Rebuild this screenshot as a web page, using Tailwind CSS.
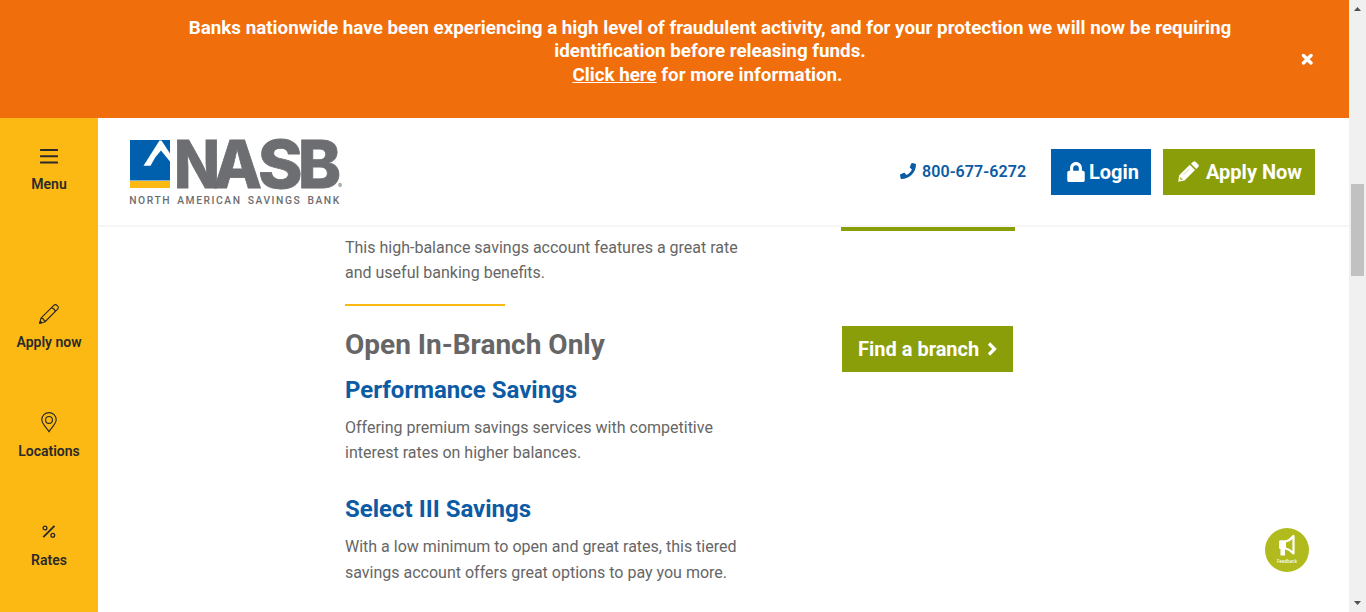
<!DOCTYPE html>
<html lang="en">
<head>
<meta charset="utf-8">
<title>NASB Savings</title>
<script src="https://cdn.jsdelivr.net/npm/@tailwindcss/browser@4"></script>
</head>
<body class="flex h-[612px] w-[1366px] overflow-hidden bg-white font-['Roboto',sans-serif] text-[#666]">
<div class="flex w-[1349px] flex-col">
  <div class="flex h-[118px] shrink-0 items-center bg-[#f06e0c] text-white">
    <p class="ml-[160px] w-[1100px] pb-[14px] text-center text-[18.8px] leading-[23.5px] font-bold">Banks nationwide have been experiencing a high level of fraudulent activity, and for your protection we will now be requiring<br>identification before releasing funds.<br><span class="pr-[5px]"><a class="underline">Click here</a> for more information.</span></p>
    <svg class="ml-[41px] h-3 w-3" viewBox="0 0 12 12"><path d="M2.500 2.500L10 10M10 2.500L2.500 10" stroke="white" stroke-width="3.400" stroke-linecap="round"/></svg>
  </div>
  <div class="flex min-h-0 flex-1">
    <nav class="flex w-[98px] shrink-0 flex-col items-center bg-[#fdb913] text-[14px] leading-5 font-semibold text-[#2a2a2a]">
      <a class="flex h-[158px] flex-col items-center pt-[30px]">
        <svg class="mb-[10px] h-4 w-[18px]" viewBox="0 0 18 16" fill="#2a2a2a"><rect y="1" width="18" height="2" rx=".6"/><rect y="7.3" width="18" height="2" rx=".6"/><rect y="13.5" width="18" height="2" rx=".6"/></svg>
        Menu
      </a>
      <a class="flex h-[109px] flex-col items-center pt-[28px]">
        <svg class="mb-[8px] h-5 w-5" viewBox="0 0 20 20" fill="none" stroke="#2a2a2a" stroke-width="1.15" stroke-linejoin="round"><path d="M.7 19.3L2 14.2 14.8 1.4Q16.5-.2 18.3 1.7Q20.200 3.5 18.6 5.200L5.800 18ZM2 14.200L4 14.500L4.400 15.900L5.700 16.200L5.800 18M12.300 3.900Q15.600 4.300 16.100 7.700"/><path d="M.7 19.3l.6-2.200 1.600 1.600z" fill="#2a2a2a"/></svg>
        Apply now
      </a>
      <a class="flex h-[109px] flex-col items-center pt-[27px]">
        <svg class="mb-[8px] h-[21px] w-4" viewBox="0 0 16 21" fill="none" stroke="#2a2a2a" stroke-width="1.15"><path d="M8 19.700C6 16.200.800 11.800.800 7.800A7.200 7.200 0 0 1 15.200 7.800C15.200 11.800 10 16.200 8 19.700Z"/><circle cx="8" cy="7.900" r="3.400"/></svg>
        Locations
      </a>
      <a class="flex h-[109px] flex-col items-center pt-[31px]">
        <svg class="mb-[12px] h-[13px] w-[14px]" viewBox="0 0 14 13" fill="none" stroke="#2a2a2a" stroke-width="1.300"><path d="M1.300 12.200L12.500 .8" stroke-width="1.900"/><circle cx="3" cy="3" r="1.900"/><circle cx="10.800" cy="10.300" r="1.900"/></svg>
        Rates
      </a>
    </nav>
    <div class="flex min-w-0 flex-1 flex-col">
      <header class="flex h-[109px] shrink-0 items-center border-b-2 border-[#f6f6f6] pl-[31px]">
        <svg class="h-[72px] w-[216px] overflow-visible" viewBox="129 136 216 72">
          <rect x="130" y="140" width="40" height="40.500" fill="#0060ae"/><rect x="130" y="181" width="40" height="7" fill="#fdb913"/>
          <path d="M143.500 165.700L159.500 140.500H161.500L170 153.500V161.500L161 150.500L155.500 157L150.500 165.700Z" fill="white"/>
          <g fill="#6d6e71" font-family="Inter, sans-serif">
            <g font-size="66" font-weight="800" stroke="#6d6e71" stroke-width=".8">
              <text x="174" y="187.700" textLength="46" lengthAdjust="spacingAndGlyphs">N</text><text x="213" y="187.700" textLength="49" lengthAdjust="spacingAndGlyphs">A</text><text x="258" y="187.700" textLength="44.500" lengthAdjust="spacingAndGlyphs">S</text><text x="298" y="187.700" textLength="43" lengthAdjust="spacingAndGlyphs">B</text>
            </g>
            <text x="129.200" y="204" font-family="Roboto, sans-serif" font-size="10.300" font-weight="500" textLength="210" lengthAdjust="spacing" word-spacing="2">NORTH AMERICAN SAVINGS BANK</text>
            <text x="338" y="188" font-size="6">®</text>
          </g>
        </svg>
        <a class="ml-[555px] flex w-[152px] items-center gap-[6px] text-[16px] font-semibold tracking-[0.08px] text-[#0c5ba5]">
          <svg class="mb-px h-4 w-4" viewBox="0 0 512 512" fill="#0c5ba5"><path d="M493.400 24.600l-104-24c-11.300-2.600-22.900 3.300-27.500 13.900l-48 112c-4.200 9.800-1.400 21.300 6.900 28l60.600 49.600c-36 76.700-98.900 140.500-177.200 177.200l-49.600-60.600c-6.800-8.300-18.200-11.100-28-6.900l-112 48C3.900 366.500-2 378.100.600 389.400l24 104C27.100 504.200 36.700 512 48 512c256.100 0 464-207.500 464-464 0-11.200-7.700-20.900-18.600-23.400z"/></svg>
          800-677-6272
        </a>
        <a class="-ml-px flex h-[46px] w-[100px] items-center gap-[4px] bg-[#0060ae] pl-4 text-[20px] font-bold text-white">
          <svg class="h-[20px] w-[18px]" viewBox="0 0 448 512" fill="white"><path d="M400 224h-24v-72C376 68.200 307.800 0 224 0S72 68.200 72 152v72H48c-26.500 0-48 21.500-48 48v192c0 26.500 21.500 48 48 48h352c26.500 0 48-21.500 48-48V272c0-26.500-21.500-48-48-48zm-104 0H152v-72c0-39.700 32.300-72 72-72s72 32.300 72 72v72z"/></svg>
          Login
        </a>
        <a class="ml-3 flex h-[46px] w-[152px] items-center gap-[7px] bg-[#8a9e0a] pl-[15px] text-[20px] font-bold text-white">
          <svg class="h-[21px] w-[21px]" viewBox="0 0 21 21"><path d="M1.200 14.300L11.800 3.800L17 9L6.500 19.600L.200 20.700ZM13 2.700L15.100 .7Q16.300 -.4 17.500 .7L20.300 3.500Q21.400 4.700 20.300 5.900L18.200 7.900Z" fill="white"/><path d="M5.500 13.800L11.700 7.600" stroke="#8a9e0a" stroke-opacity=".45" stroke-width=".8"/><path d="M2.700 16.500V18.200H4.500" stroke="#8a9e0a" stroke-width="1" fill="none"/></svg>
          Apply Now
        </a>
      </header>
      <main class="flex min-h-0 flex-1 pl-[247px] text-[16px] leading-[25.6px]">
        <div class="w-[496px] pt-[8px]">
          <p class="h-[69px] leading-[25px]">This high-balance savings account features a great rate<br>and useful banking benefits.</p>
          <div class="h-0.5 w-40 bg-[#fdb913]"></div>
          <h2 class="mt-[21px] text-[28px] leading-[36px] font-bold">Open In-Branch Only</h2>
          <h3 class="mt-[11px] text-[24px] leading-[32px] font-bold text-[#0c5ba5]">Performance Savings</h3>
          <p class="mt-[9px] leading-[25px]">Offering premium savings services with competitive<br>interest rates on higher balances.</p>
          <h3 class="mt-[28px] text-[24px] leading-[32px] font-bold text-[#0c5ba5]">Select III Savings</h3>
          <p class="mt-[9px]">With a low minimum to open and great rates, this tiered<br>savings account offers great options to pay you more.</p>
        </div>
        <div class="w-[174px]">
          <div class="h-1 bg-[#8a9e0a]"></div>
          <a class="mt-[95px] ml-px flex h-[46px] w-[171px] items-center gap-[8px] bg-[#8a9e0a] pt-px pl-4 text-[20px] font-bold text-white">Find a branch
            <svg class="mb-[2px] h-[14px] w-[10px]" viewBox="0 0 10 14" fill="none" stroke="white" stroke-width="3.200"><path d="M2 1.500L7.500 7L2 12.500"/></svg>
          </a>
        </div>
        <div class="flex flex-1 items-end justify-end pr-10 pb-10">
          <div class="flex h-11 w-11 flex-col items-center rounded-full bg-[#b2bb1e] pt-[6px]">
            <svg class="h-[23px] w-[18px] shrink-0" viewBox="0 0 18 23" fill="none" stroke="white"><path d="M2 7.500H7.500Q12 6.500 15.500 2V19.500Q12 15.500 7.500 14.500" stroke-width="2.200" stroke-linejoin="round"/><path d="M1 7.500Q1 6.500 2 6.500H8V15H7V21.500H2.500V15Q1 15 1 13.500Z" fill="white" stroke="none"/></svg>
            <svg class="h-[8px] w-[22px] shrink-0" viewBox="0 0 22 8"><text x="1" y="6" font-family="Open Sans, sans-serif" font-size="5.500" font-weight="600" fill="white" textLength="20" lengthAdjust="spacingAndGlyphs">Feedback</text></svg>
          </div>
        </div>
      </main>
    </div>
  </div>
</div>
<div class="flex w-[17px] flex-col items-center justify-between bg-[#f0f0f0] py-[7px]">
  <svg class="h-1 w-[7px]" viewBox="0 0 7 4"><path d="M3.500 0L7 4H0Z" fill="#505050"/></svg>
  <div class="mt-[173px] mb-auto h-[92px] w-[13px] bg-[#c1c1c1]"></div>
  <svg class="h-1 w-[7px]" viewBox="0 0 7 4"><path d="M0 0H7L3.500 4Z" fill="#505050"/></svg>
</div>
</body>
</html>
